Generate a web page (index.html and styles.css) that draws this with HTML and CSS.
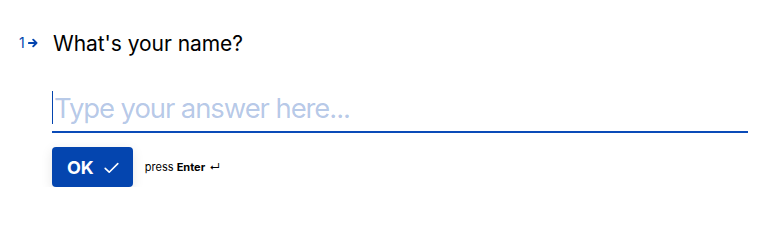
FILE: index.html
```html
<!DOCTYPE html>
<html lang="en">
<head>
<meta charset="utf-8">
<title>What's your name?</title>
<link rel="stylesheet" href="styles.css">
</head>
<body>
<main class="form">
  <div class="question-row">
    <div class="q-num">
      <span class="num">1</span>
      <svg class="num-arrow" width="10" height="10" viewBox="0 0 10 10" aria-hidden="true">
        <path d="M0.9 5H8.2M5.2 1.7L8.5 5L5.2 8.3" fill="none" stroke="currentColor" stroke-width="1.9" stroke-linecap="round" stroke-linejoin="round"/>
      </svg>
    </div>
    <h1 class="q-text">What's your name?</h1>
  </div>
  <div class="answer">
    <div class="field">
      <span class="caret"></span><span class="placeholder">Type your answer here...</span>
    </div>
    <div class="actions">
      <button class="ok-btn" type="button">
        <span>OK</span>
        <svg class="check" width="15" height="12" viewBox="0 0 15 12" aria-hidden="true">
          <path d="M1.2 6.4L5.2 10.2L13.8 1.6" fill="none" stroke="currentColor" stroke-width="1.6" stroke-linecap="round" stroke-linejoin="round"/>
        </svg>
      </button>
      <span class="hint">press <b>Enter</b> <span class="enter">↵</span></span>
    </div>
  </div>
</main>
</body>
</html>
```
FILE: styles.css
```css
* { box-sizing: border-box; }
html, body {
  margin: 0;
  padding: 0;
  background: #ffffff;
}
body {
  font-family: Inter, "Noto Sans", "Liberation Sans", sans-serif;
  color: #000000;
}
.form {
  padding: 30px 20px 0 19px;
}
.question-row {
  display: flex;
  align-items: center;
  height: 28px;
}
.q-num {
  width: 34px;
  display: flex;
  align-items: center;
  gap: 3px;
  color: #0445af;
  margin-top: -3px;
}
.num {
  font-size: 14px;
  line-height: 16px;
}
.num-arrow { display: block; margin-top: 1px; }
.q-text {
  margin: 0;
  font-size: 21px;
  font-weight: 400;
  line-height: 28px;
  color: #000;
  letter-spacing: -0.05px;
}
.answer {
  padding-left: 33px;
  margin-top: 31px;
}
.field {
  display: flex;
  align-items: center;
  height: 44px;
  padding-bottom: 6px;
  border-bottom: 2px solid #0a4bb8;
}
.caret {
  width: 1px;
  height: 33px;
  background: #0445af;
  flex: none;
}
.placeholder {
  font-size: 27.5px;
  line-height: 36px;
  letter-spacing: -1.1px;
  color: rgba(4, 69, 175, 0.3);
  padding-left: 1px;
  padding-top: 1px;
}
.actions {
  display: flex;
  align-items: center;
  gap: 12px;
  margin-top: 14px;
}
.ok-btn {
  display: flex;
  align-items: center;
  gap: 10px;
  height: 40px;
  padding: 0 14px 0 15px;
  border: none;
  border-radius: 4px;
  background: #0445af;
  color: #fff;
  font-family: inherit;
  font-size: 18px;
  font-weight: 700;
  box-shadow: 0 3px 12px rgba(0, 0, 0, 0.1);
}
.check { display: block; margin-top: 2px; }
.hint {
  font-size: 11px;
  color: #000;
}
.hint b { font-weight: 700; }
.enter { margin-left: 1px; }
```
